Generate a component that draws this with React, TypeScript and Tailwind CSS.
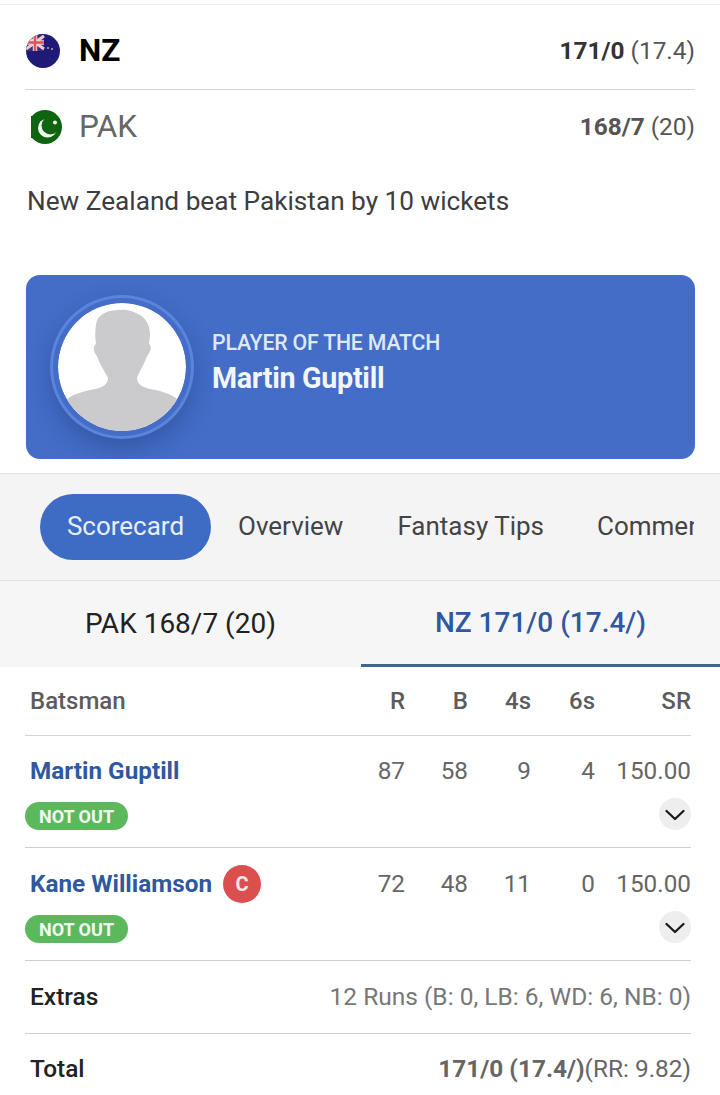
function NzFlag() {
  return (
    <svg width="34" height="34" viewBox="0 0 34 34" className="block">
      <defs>
        <clipPath id="nzClip">
          <circle cx="17" cy="17" r="17" />
        </clipPath>
      </defs>
      <g clipPath="url(#nzClip)">
        <rect width="34" height="34" fill="#1f1a78" />
        <rect x="0" y="0" width="18" height="17" fill="#3a2f80" />
        <path d="M0 2 L18 15 M18 2 L0 15" stroke="#f3c9cc" strokeWidth="3" />
        <path d="M9 0 V17 M0 8.5 H18" stroke="#f3d6d6" strokeWidth="4.5" />
        <path d="M9 0 V17 M0 8.5 H18" stroke="#e0525c" strokeWidth="2.5" />
        <circle cx="22" cy="14" r="1" fill="#d8a0b0" />
        <circle cx="26" cy="15" r="1" fill="#d8a0b0" />
      </g>
    </svg>
  );
}

function PakFlag() {
  return (
    <svg width="34" height="34" viewBox="0 0 34 34" className="block">
      <defs>
        <clipPath id="pkClip">
          <rect x="3" y="0" width="31" height="34" />
        </clipPath>
      </defs>
      <g clipPath="url(#pkClip)">
        <circle cx="17" cy="17" r="17" fill="#0f6410" />
      </g>
      <rect x="3" y="6" width="8" height="22" fill="#0f6410" />
      <circle cx="19.5" cy="18" r="9.5" fill="#f4f8f0" />
      <circle cx="22.5" cy="15.5" r="9" fill="#0f6410" />
      <circle cx="27" cy="12.5" r="2" fill="#f4f8f0" />
    </svg>
  );
}

function Silhouette() {
  return (
    <svg viewBox="0 0 128 128" className="block h-full w-full">
      <defs>
        <clipPath id="avatarClip">
          <circle cx="64" cy="64" r="64" />
        </clipPath>
      </defs>
      <circle cx="64" cy="64" r="64" fill="#ffffff" />
      <path
        clipPath="url(#avatarClip)"
        d="M38 22 C39 11 50 7 62 7 C70 6 76 9 82 12 C89 16 92 24 92 32 L91 41 C94 43 93 49 89 53 C86 62 81 69 79 75 C79 81 84 84 92 86 C102 88 113 90 120 97 L120 130 L8 130 L8 97 C16 90 28 88 37 86 C46 84 50 81 50 75 C46 67 41 60 39 53 C35 49 35 43 38 41 C37 34 37 28 38 22 Z"
        fill="#cbcbcd"
      />
    </svg>
  );
}

function NotOut() {
  return (
    <span className="flex h-[28px] w-[103px] items-center justify-center rounded-full bg-[#5cb85c] text-[18px] font-bold text-[#f3f8f0]">
      NOT OUT
    </span>
  );
}

function Expand() {
  return (
    <span className="flex h-[32px] w-[32px] items-center justify-center rounded-full bg-[#eeeeee]">
      <svg width="22" height="14" viewBox="0 0 22 14" fill="none" className="mt-[1px]">
        <polyline
          points="2.5,3 11,11 19.5,3"
          stroke="#1a1a1a"
          strokeWidth="2.3"
          strokeLinecap="round"
          strokeLinejoin="round"
        />
      </svg>
    </span>
  );
}

function StatCells({ cells, className }: { cells: string[]; className: string }) {
  return (
    <div className={`flex shrink-0 ${className}`}>
      <span className="w-[63px] text-right">{cells[0]}</span>
      <span className="w-[63px] text-right">{cells[1]}</span>
      <span className="w-[63px] text-right">{cells[2]}</span>
      <span className="w-[64px] text-right">{cells[3]}</span>
      <span className="w-[96px] text-right">{cells[4]}</span>
    </div>
  );
}

export default function App() {
  return (
    <div className="h-[1095px] w-[720px] overflow-hidden bg-white font-['Roboto',sans-serif] text-[#555]">
      <div className="h-[5px] border-b border-[#efefef]" />

      {/* Teams */}
      <div className="px-[25px]">
        <div className="flex h-[85px] items-center justify-between border-b border-[#d4d4d4] pt-[8px]">
          <div className="flex items-center gap-[19px] pl-[1px]">
            <NzFlag />
            <span className="text-[31.5px] font-bold text-black">NZ</span>
          </div>
          <span className="text-[24.4px] text-[#555]">
            <b className="font-bold text-[#333]">171/0</b> (17.4)
          </span>
        </div>
        <div className="flex h-[74px] items-center justify-between">
          <div className="flex items-center gap-[17px] pl-[3px]">
            <PakFlag />
            <span className="text-[31.5px] text-[#666]">PAK</span>
          </div>
          <span className="text-[24.4px] text-[#555]">
            <b className="font-bold text-[#555]">168/7</b> (20)
          </span>
        </div>
        <p className="mt-[18px] pl-[2px] text-[26.2px] leading-[38px] text-[#3d3d3d]">
          New Zealand beat Pakistan by 10 wickets
        </p>
      </div>

      {/* Player of the match */}
      <div className="mx-[26px] mt-[55px] flex h-[184px] w-[669px] items-center gap-[26px] overflow-hidden rounded-[14px] bg-[#436dc6] pl-[32px]">
        <div className="h-[128px] w-[128px] shrink-0 overflow-hidden rounded-full shadow-[0_0_0_5px_#436dc6,0_0_0_8px_#5b84dc,0_10px_24px_6px_rgba(30,50,110,0.4)]">
          <Silhouette />
        </div>
        <div className="mb-[10px]">
          <div className="text-[21.3px] font-medium leading-[28px] tracking-[-0.2px] text-[#dfe8f5]">
            PLAYER OF THE MATCH
          </div>
          <div className="mt-[4px] text-[28.7px] font-bold leading-[34px] tracking-[-0.3px] text-[#f2f6fb]">
            Martin Guptill
          </div>
        </div>
      </div>

      {/* Tabs */}
      <div className="mt-[14px] flex h-[108px] items-center overflow-hidden border-y border-[#e2e2e2] bg-[#f4f4f4] pl-[40px] text-[26px] text-[#444]">
        <span className="flex h-[66px] w-[171px] shrink-0 items-center justify-center rounded-full bg-[#3e6cc4] pb-[2px] text-[#e8eef8]">
          Scorecard
        </span>
        <span className="ml-[27px] shrink-0 pb-[2px]">Overview</span>
        <span className="ml-[54px] shrink-0 pb-[2px]">Fantasy Tips</span>
        <span className="ml-[53px] w-[97px] shrink-0 overflow-hidden whitespace-nowrap pb-[2px]">Commentary</span>
      </div>

      {/* Innings */}
      <div className="flex h-[86px] bg-[#f6f6f6] text-[28px]">
        <div className="flex w-[361px] items-center justify-center text-[#222]">PAK 168/7 (20)</div>
        <div className="flex w-[359px] items-center justify-center border-b-[3px] border-[#3f6690] font-medium text-[#30589f]">
          NZ 171/0 (17.4/)
        </div>
      </div>

      {/* Table */}
      <div className="pl-[25px] pr-[29px]">
        <div className="flex h-[69px] items-center justify-between border-b border-[#d4d4d4] text-[24px] font-medium text-[#5c5c5c]">
          <span className="pl-[5px]">Batsman</span>
          <StatCells cells={["R", "B", "4s", "6s", "SR"]} className="" />
        </div>

        <div className="h-[112px] border-b border-[#cfcfcf] pt-[17px]">
          <div className="flex h-[36px] items-center justify-between text-[24.3px]">
            <span className="pl-[5px] font-bold text-[#30589f]">Martin Guptill</span>
            <StatCells cells={["87", "58", "9", "4", "150.00"]} className="text-[#666]" />
          </div>
          <div className="mt-[9px] flex items-end justify-between">
            <NotOut />
            <Expand />
          </div>
        </div>

        <div className="h-[113px] border-b border-[#cfcfcf] pt-[18px]">
          <div className="flex h-[36px] items-center justify-between text-[24.3px]">
            <span className="flex items-center gap-[11px] pl-[5px] font-bold text-[#30589f]">
              Kane Williamson
              <span className="flex h-[38px] w-[38px] items-center justify-center rounded-full bg-[#dc4f4f] text-[20px] font-bold text-[#f8e8e8]">
                C
              </span>
            </span>
            <StatCells cells={["72", "48", "11", "0", "150.00"]} className="text-[#666]" />
          </div>
          <div className="mt-[9px] flex items-end justify-between">
            <NotOut />
            <Expand />
          </div>
        </div>

        <div className="flex h-[73px] items-center justify-between border-b border-[#cfcfcf] text-[24.5px]">
          <span className="pl-[5px] font-medium text-[#222]">Extras</span>
          <span className="text-[#777]">12 Runs (B: 0, LB: 6, WD: 6, NB: 0)</span>
        </div>

        <div className="flex h-[70px] items-center justify-between text-[24.4px]">
          <span className="pl-[5px] font-medium text-[#222]">Total</span>
          <span className="text-[#666]">
            <b className="font-bold">171/0 (17.4/)</b>(RR: 9.82)
          </span>
        </div>
      </div>
    </div>
  );
}
